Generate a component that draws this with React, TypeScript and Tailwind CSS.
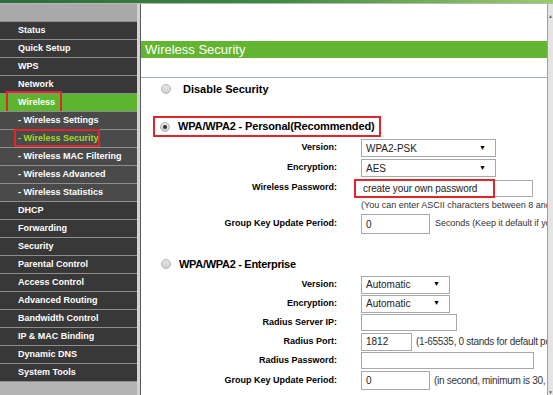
import React from "react";

type Item = { t: string; sub?: boolean; active?: boolean; current?: boolean };

const items: Item[] = [
  { t: "Status" },
  { t: "Quick Setup" },
  { t: "WPS" },
  { t: "Network" },
  { t: "Wireless", active: true },
  { t: "- Wireless Settings", sub: true },
  { t: "- Wireless Security", sub: true, current: true },
  { t: "- Wireless MAC Filtering", sub: true },
  { t: "- Wireless Advanced", sub: true },
  { t: "- Wireless Statistics", sub: true },
  { t: "DHCP" },
  { t: "Forwarding" },
  { t: "Security" },
  { t: "Parental Control" },
  { t: "Access Control" },
  { t: "Advanced Routing" },
  { t: "Bandwidth Control" },
  { t: "IP & MAC Binding" },
  { t: "Dynamic DNS" },
  { t: "System Tools" },
];

function SideRow({ it }: { it: Item }) {
  const bg = it.active ? "bg-[#5db52f]" : it.sub ? "bg-[#4a4a4a]" : "bg-[#383838]";
  const color = it.current ? "text-[#a6d82a]" : "text-white";
  return (
    <div className={`relative flex h-[18px] items-center border-t border-[#8e8e8e] pl-[18px] ${bg}`}>
      <span className={`whitespace-nowrap text-[9px] font-bold ${color}`}>{it.t}</span>
      {it.active && (
        <div className="absolute left-[6px] top-[-3px] h-[22px] w-[56px] border-2 border-[#e0262b]" />
      )}
      {it.current && (
        <div className="absolute left-[14px] top-[-1px] h-[18px] w-[86px] border-2 border-[#e0262b]" />
      )}
    </div>
  );
}

function Radio({ checked }: { checked?: boolean }) {
  return (
    <div className="flex h-[10px] w-[10px] items-center justify-center rounded-full border border-[#b4b4b4] bg-gradient-to-b from-[#e6e6e6] to-[#cfcfcf]">
      {checked && <div className="h-[4px] w-[4px] rounded-full bg-[#333]" />}
    </div>
  );
}

function Select({ value, w }: { value: string; w: string }) {
  return (
    <div className={`flex h-[18px] items-center justify-between border border-[#a8a8a8] bg-white pl-[4px] pr-[9px] text-[10px] text-[#222] ${w}`}>
      <span>{value}</span>
      <span className="text-[7px] text-black">▼</span>
    </div>
  );
}

function Label({ children }: { children: React.ReactNode }) {
  return <div className="w-[196px] shrink-0 text-right text-[9px] font-bold text-black">{children}</div>;
}

export default function App() {
  return (
    <div className="flex h-[395px] w-[553px] flex-col overflow-hidden bg-white font-['Liberation_Sans',Arial,sans-serif]">
      <div className="h-[3px] shrink-0 bg-gradient-to-r from-[#2c6b3a] via-[#3d8a42] to-[#9bcd6c]" />
      <div className="h-[1px] shrink-0 bg-[#b8b8b8]" />
      <div className="flex min-h-0 flex-1">
        {/* Sidebar */}
        <div className="flex w-[137px] shrink-0 flex-col bg-[#b2b2b2]">
          <div className="h-[17px] shrink-0 bg-[#a9a9a9]" />
          {items.map((it) => (
            <SideRow key={it.t} it={it} />
          ))}
          <div className="flex-1 border-t border-[#8e8e8e] bg-[#b4b4b4]" />
        </div>
        <div className="w-[3px] shrink-0 bg-[#d2d2d2]" />
        <div className="w-[1px] shrink-0 bg-[#5a5a5a]" />
        {/* Content */}
        <div className="flex min-w-0 flex-1 flex-col overflow-hidden">
          <div className="h-[37px] shrink-0" />
          <div className="flex h-[17px] shrink-0 items-center bg-[#63b531] pl-[4px]">
            <span className="text-[13px] text-white">Wireless Security</span>
          </div>
          <div className="h-[19px] shrink-0" />
          <div className="h-[1px] shrink-0 bg-[#a3b5a8]" />

          {/* Disable */}
          <div className="mt-[2px] flex h-[18px] shrink-0 items-center pl-[20px]">
            <Radio />
            <span className="ml-[12px] text-[11px] font-bold text-black">Disable Security</span>
          </div>

          {/* Personal */}
          <div className="ml-[12px] mt-[18px] flex h-[21px] w-[228px] shrink-0 items-center border-2 border-[#e0262b] pl-[5px]">
            <Radio checked />
            <span className="ml-[8px] whitespace-nowrap text-[11px] font-bold tracking-[-0.15px] text-black">
              WPA/WPA2 - Personal(Recommended)
            </span>
          </div>
          <div className="mt-[1px] flex h-[20px] shrink-0 items-center">
            <Label>Version:</Label>
            <div className="ml-[24px]">
              <Select value="WPA2-PSK" w="w-[135px]" />
            </div>
          </div>
          <div className="flex h-[20px] shrink-0 items-center">
            <Label>Encryption:</Label>
            <div className="ml-[24px]">
              <Select value="AES" w="w-[135px]" />
            </div>
          </div>
          <div className="flex h-[20px] shrink-0 items-center">
            <Label>Wireless Password:</Label>
            <div className="relative ml-[18px]">
              <div className="flex h-[17px] w-[178px] items-center border border-[#a8a8a8] bg-white pl-[7px] text-[10px] tracking-[-0.1px] text-[#222]">
                create your own password
              </div>
              <div className="absolute left-[-1px] top-[-1px] h-[19px] w-[141px] border-2 border-[#e0262b]" />
            </div>
          </div>
          <div className="flex h-[15px] shrink-0 items-center">
            <div className="w-[196px] shrink-0" />
            <div className="ml-[24px] whitespace-nowrap text-[9px] text-[#333]">
              (You can enter ASCII characters between 8 and 63 or Hex characters between 8 and 64.)
            </div>
          </div>
          <div className="mt-[1px] flex h-[20px] shrink-0 items-center">
            <Label>Group Key Update Period:</Label>
            <div className="ml-[24px] flex items-center">
              <div className="flex h-[20px] w-[69px] items-center border border-[#a8a8a8] bg-white pl-[4px] text-[10px] text-[#222]">0</div>
              <span className="ml-[5px] whitespace-nowrap text-[9px] tracking-[-0.05px] text-[#333]">
                Seconds (Keep it default if you are not sure, minimum is 30, 0 means no update)
              </span>
            </div>
          </div>

          {/* Enterprise */}
          <div className="mt-[21px] flex h-[18px] shrink-0 items-center pl-[20px]">
            <Radio />
            <span className="ml-[8px] whitespace-nowrap text-[11px] font-bold tracking-[-0.3px] text-black">
              WPA/WPA2 - Enterprise
            </span>
          </div>
          <div className="mt-[2px] flex h-[19px] shrink-0 items-center">
            <Label>Version:</Label>
            <div className="ml-[24px]">
              <Select value="Automatic" w="w-[89px]" />
            </div>
          </div>
          <div className="flex h-[19px] shrink-0 items-center">
            <Label>Encryption:</Label>
            <div className="ml-[24px]">
              <Select value="Automatic" w="w-[89px]" />
            </div>
          </div>
          <div className="flex h-[19px] shrink-0 items-center">
            <Label>Radius Server IP:</Label>
            <div className="ml-[24px]">
              <div className="h-[17px] w-[96px] border border-[#a8a8a8] bg-white" />
            </div>
          </div>
          <div className="flex h-[19px] shrink-0 items-center">
            <Label>Radius Port:</Label>
            <div className="ml-[24px] flex items-center">
              <div className="flex h-[18px] w-[51px] items-center border border-[#a8a8a8] bg-white pl-[4px] text-[10px] text-[#222]">1812</div>
              <span className="ml-[4px] whitespace-nowrap text-[10px] tracking-[-0.3px] text-[#333]">
                (1-65535, 0 stands for default port 1812)
              </span>
            </div>
          </div>
          <div className="flex h-[19px] shrink-0 items-center">
            <Label>Radius Password:</Label>
            <div className="ml-[24px]">
              <div className="h-[17px] w-[173px] border border-[#a8a8a8] bg-white" />
            </div>
          </div>
          <div className="flex h-[21px] shrink-0 items-center">
            <Label>Group Key Update Period:</Label>
            <div className="ml-[24px] flex items-center">
              <div className="flex h-[19px] w-[69px] items-center border border-[#a8a8a8] bg-white pl-[4px] text-[10px] text-[#222]">0</div>
              <span className="ml-[4px] whitespace-nowrap text-[10px] tracking-[-0.3px] text-[#333]">
                (in second, minimum is 30, 0 means no update)
              </span>
            </div>
          </div>
        </div>
        {/* Scrollbar */}
        <div className="flex w-[6px] shrink-0 flex-col border-l border-[#a0a0a0] bg-[#e4e4e4]">
          <div className="h-[10px] shrink-0" />
          <div className="text-center text-[5px] leading-[5px] text-[#666]">▲</div>
          <div className="flex-1" />
          <div className="text-center text-[5px] leading-[5px] text-[#666]">▼</div>
        </div>
      </div>
    </div>
  );
}
